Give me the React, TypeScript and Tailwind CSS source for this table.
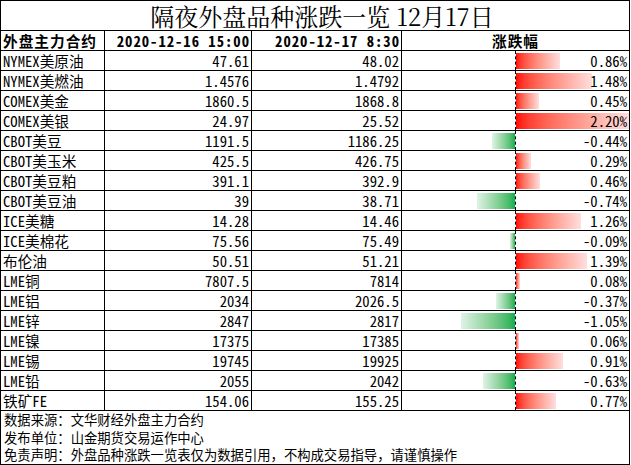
import React from "react";

type Row = { name: string; prev: string; last: string; pct: number };

const rows: Row[] = [
  { name: "NYMEX美原油", prev: "47.61", last: "48.02", pct: 0.86 },
  { name: "NYMEX美燃油", prev: "1.4576", last: "1.4792", pct: 1.48 },
  { name: "COMEX美金", prev: "1860.5", last: "1868.8", pct: 0.45 },
  { name: "COMEX美银", prev: "24.97", last: "25.52", pct: 2.2 },
  { name: "CBOT美豆", prev: "1191.5", last: "1186.25", pct: -0.44 },
  { name: "CBOT美玉米", prev: "425.5", last: "426.75", pct: 0.29 },
  { name: "CBOT美豆粕", prev: "391.1", last: "392.9", pct: 0.46 },
  { name: "CBOT美豆油", prev: "39", last: "38.71", pct: -0.74 },
  { name: "ICE美糖", prev: "14.28", last: "14.46", pct: 1.26 },
  { name: "ICE美棉花", prev: "75.56", last: "75.49", pct: -0.09 },
  { name: "布伦油", prev: "50.51", last: "51.21", pct: 1.39 },
  { name: "LME铜", prev: "7807.5", last: "7814", pct: 0.08 },
  { name: "LME铝", prev: "2034", last: "2026.5", pct: -0.37 },
  { name: "LME锌", prev: "2847", last: "2817", pct: -1.05 },
  { name: "LME镍", prev: "17375", last: "17385", pct: 0.06 },
  { name: "LME锡", prev: "19745", last: "19925", pct: 0.91 },
  { name: "LME铅", prev: "2055", last: "2042", pct: -0.63 },
  { name: "铁矿FE", prev: "154.06", last: "155.25", pct: 0.77 },
];

// largest move fills half the cell
const SCALE = 113 / 2.2;

function ChangeCell({ pct }: { pct: number }) {
  const w = Math.round(Math.abs(pct) * SCALE);
  return (
    <div className="relative flex h-[19px] bg-white">
      <div className="flex w-[113px] items-center justify-end">
        {pct < 0 && <div className="h-4 bg-gradient-to-r from-[#dff3e6] to-[#00b050]" style={{ width: w }} />}
      </div>
      <div className="w-px border-l border-dashed border-black" />
      <div className="flex flex-1 items-center">
        {pct > 0 && <div className="h-4 bg-gradient-to-r from-[#ff0000] to-[#ffdede]" style={{ width: w }} />}
      </div>
      <span className="absolute right-[2px] top-0 leading-[19px]">{pct.toFixed(2)}%</span>
    </div>
  );
}

export default function App() {
  return (
    <div className="w-[630px] bg-white font-['Noto_Sans_Mono_CJK_SC','Noto_Sans_CJK_SC',monospace] text-[14.67px] text-black">
      <div className="grid grid-cols-[103px_146px_149px_227px] gap-px border border-black bg-black">
        <div className="col-span-4 flex h-[29px] items-center justify-center bg-white pl-[14px] font-['Noto_Serif_CJK_SC','Noto_Sans_CJK_SC',serif] text-[24px] leading-[29px]">
          隔夜外盘品种涨跌一览 12月17日
        </div>

        <div className="h-[19px] overflow-hidden whitespace-nowrap bg-white pl-[2px] font-bold tracking-[1px] leading-[19px]">外盘主力合约</div>
        <div className="h-[19px] overflow-hidden whitespace-nowrap bg-white pr-[1px] text-right font-bold tracking-[1px] leading-[19px]">2020-12-16 15:00</div>
        <div className="h-[19px] overflow-hidden whitespace-nowrap bg-white pr-[1px] text-right font-bold tracking-[1px] leading-[19px]">2020-12-17 8:30</div>
        <div className="h-[19px] bg-white text-center font-bold tracking-[1px] leading-[19px]">涨跌幅</div>

        {rows.map((r) => (
          <React.Fragment key={r.name}>
            <div className="h-[19px] bg-white pl-[2px] leading-[19px]">{r.name}</div>
            <div className="h-[19px] bg-white pr-[2px] text-right leading-[19px]">{r.prev}</div>
            <div className="h-[19px] bg-white pr-[2px] text-right leading-[19px]">{r.last}</div>
            <ChangeCell pct={r.pct} />
          </React.Fragment>
        ))}

        <div className="col-span-4 h-[53px] bg-white pl-[3px] text-[13.33px] leading-[17.6px]">
          <div>数据来源：文华财经外盘主力合约</div>
          <div>发布单位：山金期货交易运作中心</div>
          <div>免责声明：外盘品种涨跌一览表仅为数据引用，不构成交易指导，请谨慎操作</div>
        </div>
      </div>
    </div>
  );
}
